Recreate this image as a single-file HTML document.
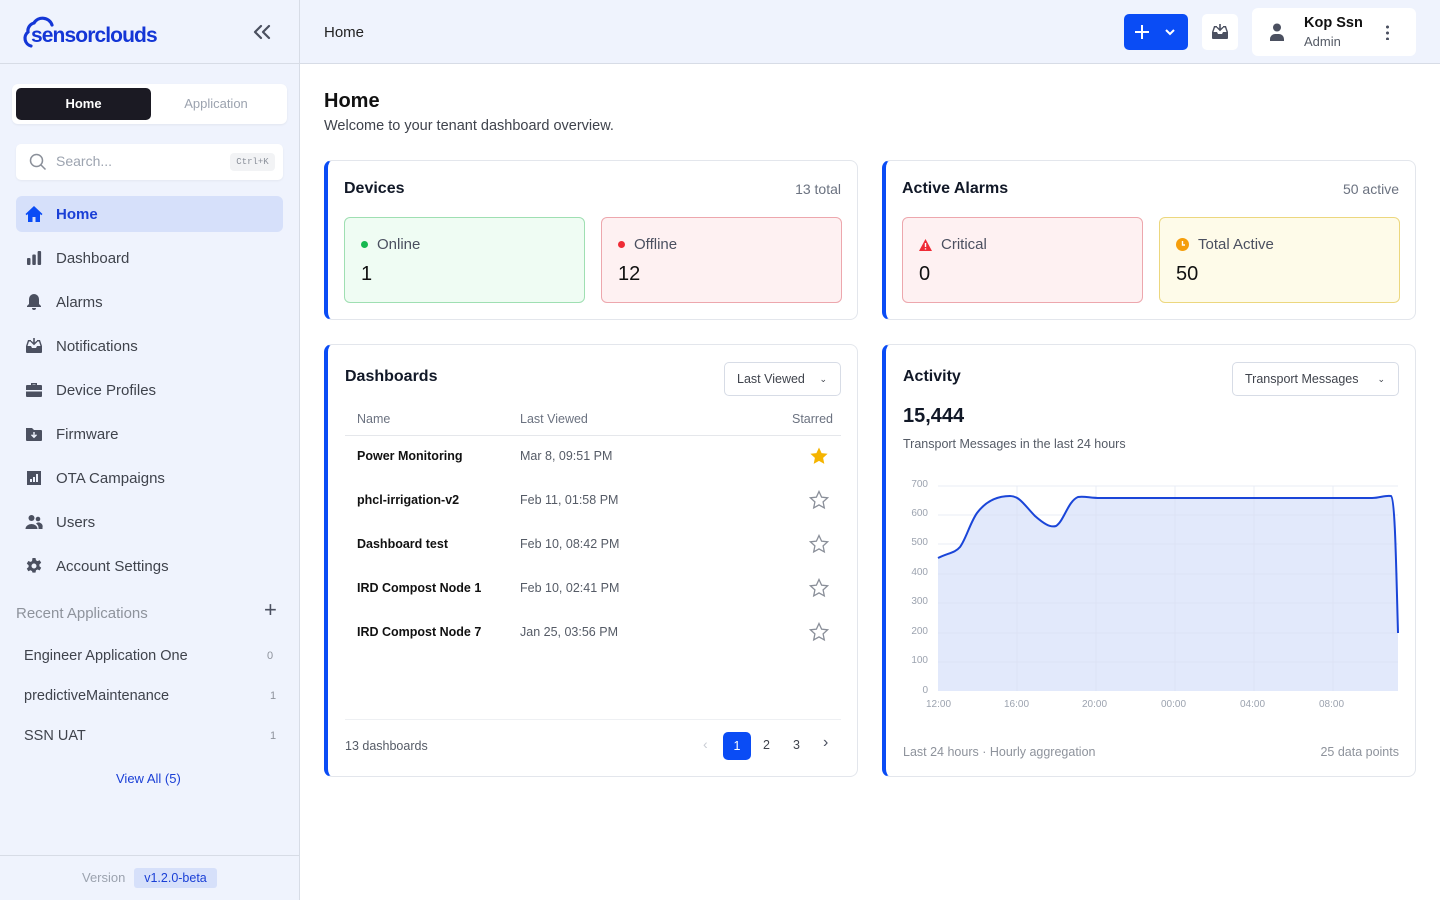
<!DOCTYPE html>
<html><head><meta charset="utf-8"><style>
*{box-sizing:border-box;margin:0;padding:0}
body{width:1440px;height:900px;overflow:hidden;font-family:"Liberation Sans",sans-serif;background:#fff;color:#111827;position:relative}
.a{position:absolute}
.side{left:0;top:0;width:300px;height:900px;background:#eff3fd;border-right:1px solid #d7dce6}
.hdr{left:300px;top:0;width:1140px;height:64px;background:#eff3fd;border-bottom:1px solid #d7dce6}
.nav{position:absolute;left:16px;width:267px;height:36px;border-radius:6px;display:flex;align-items:center;padding-left:9px;font-size:15px;color:#3f434c}
.nav svg{width:18px;height:18px;margin-right:13px;fill:#4b5060}
.card{position:absolute;background:#fff;border:1px solid #e3e6ec;border-left:4px solid #0a4cf5;border-radius:8px}
.stat{position:absolute;top:56px;width:241px;height:86px;border-radius:6px;padding:18px 16px}
.stat .l{font-size:15px;color:#4b5060;display:flex;align-items:center}
.stat .v{font-size:20px;margin-top:10px;color:#111}
.dot{width:7px;height:7px;border-radius:50%;margin-right:9px;display:inline-block}
.row{position:absolute;left:32px;width:484px;font-size:12.5px;display:flex}
.row .n{width:163px;color:#111;font-weight:bold}
.row .d{color:#555b66}
.star{position:absolute;right:12px;top:-3px;width:20px;height:20px}
.yl{position:absolute;left:14px;width:28px;text-align:right;font-size:10px;color:#9ca3af}
.xl{position:absolute;top:354px;font-size:10px;color:#9ca3af}
</style></head><body>
<div class="a side">
  <svg class="a" style="left:22px;top:15px" width="40" height="34" viewBox="0 0 40 34"><path d="M9 31 A8 8 0 0 1 6 17 A8 8 0 0 1 12 8 A10 10 0 0 1 30 10" fill="none" stroke="#1436d6" stroke-width="3.2" stroke-linecap="round"/></svg>
  <div class="a" style="left:31px;top:24px;font-size:21px;font-weight:bold;color:#1436d6;letter-spacing:-0.9px">sensorclouds</div>
  <svg class="a" style="left:253px;top:24px" width="18" height="16" viewBox="0 0 18 16"><path d="M8 2L2 8l6 6M16 2l-6 6 6 6" fill="none" stroke="#4b5060" stroke-width="2.2" stroke-linecap="round" stroke-linejoin="round"/></svg>
  <div class="a" style="left:0;top:63px;width:299px;border-top:1px solid #d7dce6"></div>
  <div class="a" style="left:12px;top:84px;width:275px;height:40px;background:#fff;border-radius:6px;box-shadow:0 1px 2px rgba(0,0,0,.06)">
    <div class="a" style="left:4px;top:4px;width:135px;height:32px;background:#1b1a23;border-radius:5px;color:#fff;font-size:13px;font-weight:bold;text-align:center;line-height:32px">Home</div>
    <div class="a" style="left:139px;top:4px;width:130px;height:32px;color:#9ca3af;font-size:13px;text-align:center;line-height:32px">Application</div>
  </div>
  <div class="a" style="left:16px;top:144px;width:267px;height:36px;background:#fff;border-radius:5px;box-shadow:0 1px 2px rgba(0,0,0,.05)">
    <svg class="a" style="left:13px;top:9px" width="18" height="18" viewBox="0 0 18 18"><circle cx="7.5" cy="7.5" r="6" fill="none" stroke="#8a8f99" stroke-width="1.5"/><path d="M12 12l4.5 4.5" stroke="#8a8f99" stroke-width="1.5"/></svg>
    <div class="a" style="left:40px;top:9px;font-size:14px;color:#9ca3af">Search...</div>
    <div class="a" style="left:214px;top:9px;width:45px;height:18px;background:#f2f3f5;border-radius:4px;font-family:'Liberation Mono',monospace;font-size:9px;color:#8a8f99;text-align:center;line-height:18px">Ctrl+K</div>
  </div>
  <div class="nav" style="top:196px;background:#d6e0fa;color:#1a3fd6;font-weight:bold"><svg viewBox="0 0 18 18" style="fill:#0a4cf5"><path d="M9 1L0.5 9l1.2 1.2L3 9v8h4.5v-5h3v5H15V9l1.3 1.2L17.5 9z"/></svg>Home</div>
  <div class="nav" style="top:240px"><svg viewBox="0 0 18 18"><rect x="2" y="9" width="3.5" height="7" rx="1"/><rect x="7.3" y="5.5" width="3.5" height="10.5" rx="1"/><rect x="12.6" y="2" width="3.5" height="14" rx="1"/></svg>Dashboard</div>
  <div class="nav" style="top:284px"><svg viewBox="0 0 18 18"><path d="M9 1a5 5 0 0 0-5 5v5l-2 2v1h14v-1l-2-2V6a5 5 0 0 0-5-5zM7 15a2 2 0 0 0 4 0z"/></svg>Alarms</div>
  <div class="nav" style="top:328px"><svg viewBox="0 0 18 18"><path d="M1 9l2-6h3v1.5H4L2.5 9H6l1 2h4l1-2h3.5L14 4.5h-2V3h3l2 6v6a1 1 0 0 1-1 1H2a1 1 0 0 1-1-1zM8.2 1h1.6v4.5l1.7-1.7 1 1L9 8.3 5.5 4.8l1-1 1.7 1.7z"/></svg>Notifications</div>
  <div class="nav" style="top:372px"><svg viewBox="0 0 18 18"><path d="M6 2h6v2h4a1 1 0 0 1 1 1v4H1V5a1 1 0 0 1 1-1h4zm1.5 1.5V4h3v-.5zM1 10.5h16V15a1 1 0 0 1-1 1H2a1 1 0 0 1-1-1z"/></svg>Device Profiles</div>
  <div class="nav" style="top:416px"><svg viewBox="0 0 18 18"><path d="M1 3h6l2 2h7a1 1 0 0 1 1 1v9a1 1 0 0 1-1 1H2a1 1 0 0 1-1-1zm7.3 4v3.5L7 9.2l-1 1 3 3 3-3-1-1-1.3 1.3V7z"/></svg>Firmware</div>
  <div class="nav" style="top:460px"><svg viewBox="0 0 18 18"><path d="M2 2h14v14H2zm3 8v3h2v-3zm3-2v5h2V8zm3-3v8h2V5z"/></svg>OTA Campaigns</div>
  <div class="nav" style="top:504px"><svg viewBox="0 0 18 18"><circle cx="6.5" cy="5" r="3"/><circle cx="13" cy="6" r="2.3"/><path d="M0.5 16a6 5 0 0 1 12 0zM11 10.5a4 4 0 0 1 6.5 4V16H13.5a7 6 0 0 0-2.5-5.5z"/></svg>Users</div>
  <div class="nav" style="top:548px"><svg viewBox="0 0 18 18"><path d="M7.5 1h3l.5 2.3 1.5.8 2.2-.9 1.5 2.6-1.8 1.6v1.8l1.8 1.6-1.5 2.6-2.2-.9-1.5.8-.5 2.3h-3L7 14.1l-1.5-.8-2.2.9-1.5-2.6 1.8-1.6V8.2L1.8 6.6l1.5-2.6 2.2.9L7 4.1zM9 6.5a2.5 2.5 0 1 0 0 5 2.5 2.5 0 0 0 0-5z"/></svg>Account Settings</div>
  <div class="a" style="left:16px;top:605px;font-size:15px;color:#8e939c">Recent Applications</div>
  <div class="a" style="left:264px;top:597px;font-size:22px;color:#4b5060">+</div>
  <div class="a" style="left:24px;top:648px;font-size:14.5px;color:#3f434c">Engineer Application One</div><div class="a" style="left:267px;top:650px;font-size:11px;color:#8e939c">0</div>
  <div class="a" style="left:24px;top:688px;font-size:14.5px;color:#3f434c">predictiveMaintenance</div><div class="a" style="left:270px;top:690px;font-size:11px;color:#8e939c">1</div>
  <div class="a" style="left:24px;top:728px;font-size:14.5px;color:#3f434c">SSN UAT</div><div class="a" style="left:270px;top:730px;font-size:11px;color:#8e939c">1</div>
  <div class="a" style="left:116px;top:771px;font-size:13px;color:#1a3fd6">View All (5)</div>
  <div class="a" style="left:0;top:855px;width:299px;border-top:1px solid #d7dce6"></div>
  <div class="a" style="left:82px;top:870px;font-size:13px;color:#9ca3af">Version</div>
  <div class="a" style="left:134px;top:868px;width:83px;height:20px;background:#d6e0fa;border-radius:3px;font-size:12.5px;color:#1a3fd6;text-align:center;line-height:20px">v1.2.0-beta</div>
</div>
<div class="a hdr">
  <div class="a" style="left:24px;top:24px;font-size:15px;color:#222">Home</div>
  <div class="a" style="left:824px;top:14px;width:64px;height:36px;background:#0a4cf5;border-radius:5px">
    <svg class="a" style="left:10px;top:10px" width="16" height="16" viewBox="0 0 16 16"><path d="M8 1v14M1 8h14" stroke="#fff" stroke-width="2"/></svg>
    <svg class="a" style="left:40px;top:13px" width="12" height="10" viewBox="0 0 12 10"><path d="M2 3l4 4 4-4" fill="none" stroke="#fff" stroke-width="2"/></svg>
  </div>
  <div class="a" style="left:902px;top:14px;width:36px;height:36px;background:#fff;border-radius:5px">
    <svg class="a" style="left:9px;top:9px" width="18" height="18" viewBox="0 0 18 18"><path fill="#4b5060" d="M1 9l2-6h3v1.5H4L2.5 9H6l1 2h4l1-2h3.5L14 4.5h-2V3h3l2 6v6a1 1 0 0 1-1 1H2a1 1 0 0 1-1-1zM8.2 1h1.6v4.5l1.7-1.7 1 1L9 8.3 5.5 4.8l1-1 1.7 1.7z"/></svg>
  </div>
  <div class="a" style="left:952px;top:8px;width:164px;height:48px;background:#fff;border-radius:6px">
    <svg class="a" style="left:17px;top:15px" width="16" height="18" viewBox="0 0 16 18"><circle cx="8" cy="4.5" r="4" fill="#4b5060"/><path d="M1 18v-2a5 5 0 0 1 5-5h4a5 5 0 0 1 5 5v2z" fill="#4b5060"/></svg>
    <div class="a" style="left:52px;top:7px;font-size:14.5px;font-weight:bold;color:#111">Kop Ssn</div>
    <div class="a" style="left:52px;top:26px;font-size:13px;color:#555b66">Admin</div>
    <div class="a" style="left:134px;top:16px;width:3px;height:16px;background:radial-gradient(circle,#4b5060 1.4px,transparent 1.6px) 0 0/3px 6px"></div>
  </div>
</div>
<div class="a" style="left:324px;top:90px;font-size:20px;font-weight:bold;color:#111">Home</div>
<div class="a" style="left:324px;top:118px;font-size:14.5px;color:#3f434c">Welcome to your tenant dashboard overview.</div>

<div class="card" style="left:324px;top:160px;width:534px;height:160px">
  <div class="a" style="left:16px;top:19px;font-size:16px;font-weight:bold">Devices</div>
  <div class="a" style="right:16px;top:20px;font-size:14px;color:#6b7280">13 total</div>
  <div class="stat" style="left:16px;background:#effcf3;border:1px solid #9fdfb2"><div class="l"><span class="dot" style="background:#16b850"></span>Online</div><div class="v">1</div></div>
  <div class="stat" style="left:273px;background:#fef1f2;border:1px solid #eda7ad"><div class="l"><span class="dot" style="background:#ef2b36"></span>Offline</div><div class="v">12</div></div>
</div>
<div class="card" style="left:882px;top:160px;width:534px;height:160px">
  <div class="a" style="left:16px;top:19px;font-size:16px;font-weight:bold">Active Alarms</div>
  <div class="a" style="right:16px;top:20px;font-size:14px;color:#6b7280">50 active</div>
  <div class="stat" style="left:16px;background:#fef1f2;border:1px solid #eda7ad"><div class="l"><svg width="13" height="12" viewBox="0 0 13 12" style="margin-right:9px"><path d="M6.5 0L13 12H0z" fill="#ef2b36"/><path d="M6.5 4v4M6.5 9.3v1.2" stroke="#fff" stroke-width="1.4"/></svg>Critical</div><div class="v">0</div></div>
  <div class="stat" style="left:273px;background:#fefbe9;border:1px solid #ecd77e"><div class="l"><svg width="13" height="13" viewBox="0 0 13 13" style="margin-right:9px"><circle cx="6.5" cy="6.5" r="6.5" fill="#f59e0b"/><path d="M6.5 3v4h2.5" fill="none" stroke="#fff" stroke-width="1.4"/></svg>Total Active</div><div class="v">50</div></div>
</div>

<div class="card" style="left:324px;top:344px;width:534px;height:433px">
  <div class="a" style="left:17px;top:23px;font-size:16px;font-weight:bold">Dashboards</div>
  <div class="a" style="left:396px;top:17px;width:117px;height:34px;border:1px solid #d7dce6;border-radius:5px;font-size:12.5px;color:#3f434c;line-height:32px;padding-left:12px">Last Viewed <span style="position:absolute;right:13px;font-size:9px">⌄</span></div>
  <div class="a" style="left:29px;top:67px;font-size:12.5px;color:#6b7280">Name</div>
  <div class="a" style="left:192px;top:67px;font-size:12.5px;color:#6b7280">Last Viewed</div>
  <div class="a" style="right:24px;top:67px;font-size:12.5px;color:#6b7280">Starred</div>
  <div class="a" style="left:17px;top:90px;width:496px;border-top:1px solid #e5e7eb"></div>
  <div class="row" style="left:29px;top:104px"><span class="n">Power Monitoring</span><span class="d">Mar 8, 09:51 PM</span><svg class="star" viewBox="0 0 20 20"><path d="M10 1.5l2.6 5.6 6 .7-4.5 4.1 1.2 6-5.3-3-5.3 3 1.2-6L1.4 7.8l6-.7z" fill="#f5b400"/></svg></div>
  <div class="row" style="left:29px;top:148px"><span class="n">phcl-irrigation-v2</span><span class="d">Feb 11, 01:58 PM</span><svg class="star" viewBox="0 0 20 20"><path d="M10 1.5l2.6 5.6 6 .7-4.5 4.1 1.2 6-5.3-3-5.3 3 1.2-6L1.4 7.8l6-.7z" fill="none" stroke="#8a8f99" stroke-width="1.3"/></svg></div>
  <div class="row" style="left:29px;top:192px"><span class="n">Dashboard test</span><span class="d">Feb 10, 08:42 PM</span><svg class="star" viewBox="0 0 20 20"><path d="M10 1.5l2.6 5.6 6 .7-4.5 4.1 1.2 6-5.3-3-5.3 3 1.2-6L1.4 7.8l6-.7z" fill="none" stroke="#8a8f99" stroke-width="1.3"/></svg></div>
  <div class="row" style="left:29px;top:236px"><span class="n">IRD Compost Node 1</span><span class="d">Feb 10, 02:41 PM</span><svg class="star" viewBox="0 0 20 20"><path d="M10 1.5l2.6 5.6 6 .7-4.5 4.1 1.2 6-5.3-3-5.3 3 1.2-6L1.4 7.8l6-.7z" fill="none" stroke="#8a8f99" stroke-width="1.3"/></svg></div>
  <div class="row" style="left:29px;top:280px"><span class="n">IRD Compost Node 7</span><span class="d">Jan 25, 03:56 PM</span><svg class="star" viewBox="0 0 20 20"><path d="M10 1.5l2.6 5.6 6 .7-4.5 4.1 1.2 6-5.3-3-5.3 3 1.2-6L1.4 7.8l6-.7z" fill="none" stroke="#8a8f99" stroke-width="1.3"/></svg></div>
  <div class="a" style="left:17px;top:374px;width:496px;border-top:1px solid #eef0f3"></div>
  <div class="a" style="left:17px;top:394px;font-size:12.5px;color:#555b66">13 dashboards</div>
  <div class="a" style="left:375px;top:391px;font-size:14px;color:#c8ccd3">‹</div>
  <div class="a" style="left:395px;top:387px;width:28px;height:28px;background:#0a4cf5;border-radius:5px;color:#fff;font-size:12.5px;text-align:center;line-height:28px">1</div>
  <div class="a" style="left:435px;top:393px;font-size:12.5px;color:#3f434c">2</div>
  <div class="a" style="left:465px;top:393px;font-size:12.5px;color:#3f434c">3</div>
  <div class="a" style="left:495px;top:389px;font-size:16px;color:#4b5060">›</div>
</div>

<div class="card" style="left:882px;top:344px;width:534px;height:433px">
  <div class="a" style="left:17px;top:23px;font-size:16px;font-weight:bold">Activity</div>
  <div class="a" style="left:346px;top:17px;width:167px;height:34px;border:1px solid #d7dce6;border-radius:5px;font-size:12.5px;color:#3f434c;line-height:32px;padding-left:12px">Transport Messages <span style="position:absolute;right:13px;font-size:9px">⌄</span></div>
  <div class="a" style="left:17px;top:60px;font-size:20px;font-weight:bold">15,444</div>
  <div class="a" style="left:17px;top:92px;font-size:12.5px;color:#555b66">Transport Messages in the last 24 hours</div>
  <div class="yl" style="top:134px">700</div><div class="yl" style="top:163px">600</div><div class="yl" style="top:192px">500</div><div class="yl" style="top:222px">400</div><div class="yl" style="top:251px">300</div><div class="yl" style="top:281px">200</div><div class="yl" style="top:310px">100</div><div class="yl" style="top:340px">0</div>
  <div class="xl" style="left:40px">12:00</div><div class="xl" style="left:118px">16:00</div><div class="xl" style="left:196px">20:00</div><div class="xl" style="left:275px">00:00</div><div class="xl" style="left:354px">04:00</div><div class="xl" style="left:433px">08:00</div>
  <svg class="a" style="left:-4px;top:-1px" width="534" height="433" viewBox="882 343 534 433">
    <path d="M938 557 C948 552 955 552 960 546 C966 538 970 522 977 512 C986 500 998 495 1010 495 C1020 495 1025 505 1035 515 C1043 522 1050 527 1056 525 C1064 520 1068 500 1078 496 C1085 495 1090 497 1100 497 L1372 497 C1380 497 1385 494 1391 495 C1395 497 1396 560 1398 632 L1398 690 L938 690Z" fill="#e2e9fb"/>
    <g stroke="#d9e0f0" stroke-width="1" opacity=".6"><path d="M938 485H1398M938 514H1398M938 543H1398M938 573H1398M938 602H1398M938 632H1398M938 661H1398M1017 485V690M1096 485V690M1175 485V690M1254 485V690M1333 485V690"/></g>
    <path d="M938 557 C948 552 955 552 960 546 C966 538 970 522 977 512 C986 500 998 495 1010 495 C1020 495 1025 505 1035 515 C1043 522 1050 527 1056 525 C1064 520 1068 500 1078 496 C1085 495 1090 497 1100 497 L1372 497 C1380 497 1385 494 1391 495 C1395 497 1396 560 1398 632" fill="none" stroke="#1a45d8" stroke-width="2"/>
  </svg>
  <div class="a" style="left:17px;top:400px;font-size:12.5px;color:#8e939c">Last 24 hours · Hourly aggregation</div>
  <div class="a" style="right:16px;top:400px;font-size:12.5px;color:#8e939c">25 data points</div>
</div>
</body></html>
